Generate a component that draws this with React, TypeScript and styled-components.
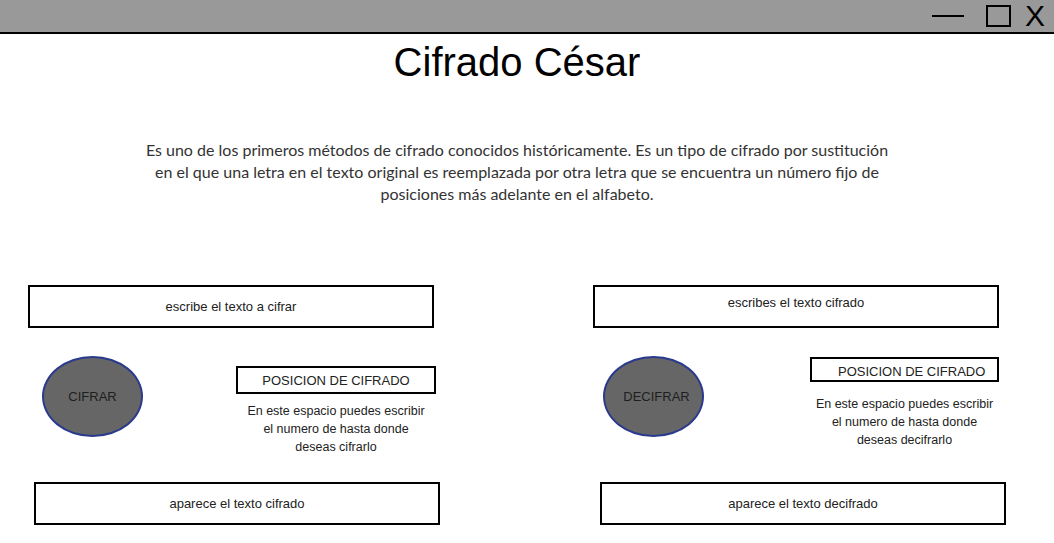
import styled, { createGlobalStyle } from "styled-components";

const GlobalStyle = createGlobalStyle`
  html, body {
    margin: 0;
    padding: 0;
    background: #ffffff;
  }
  body {
    font-family: "Liberation Sans", Arial, sans-serif;
    color: #222;
  }
`;

interface PanelData {
  inputLabel: string;
  inputTop?: boolean;
  action: string;
  actionPad: number;
  ellipseOffset: number;
  posOffset: number;
  posTop: number;
  posWidth: number;
  posPadLeft: number;
  descGap: number;
  description: string[];
  outputLabel: string;
  outputOffset: number;
}

const panels: PanelData[] = [
  {
    inputLabel: "escribe el texto a cifrar",
    action: "CIFRAR",
    actionPad: 0,
    ellipseOffset: 14,
    posOffset: 208,
    posTop: 10,
    posWidth: 200,
    posPadLeft: 0,
    descGap: 8,
    description: [
      "En este espacio puedes escribir",
      "el numero de hasta donde",
      "deseas cifrarlo",
    ],
    outputLabel: "aparece el texto cifrado",
    outputOffset: 6,
  },
  {
    inputLabel: "escribes el texto cifrado",
    inputTop: true,
    action: "DECIFRAR",
    actionPad: 6,
    ellipseOffset: 10,
    posOffset: 217,
    posTop: 1,
    posWidth: 189,
    posPadLeft: 26,
    descGap: 13,
    description: [
      "En este espacio puedes escribir",
      "el numero de hasta donde",
      "deseas decifrarlo",
    ],
    outputLabel: "aparece el texto decifrado",
    outputOffset: 7,
  },
];

const App: React.FC = () => {
  return (
    <>
      <GlobalStyle />
      <TitleBar>
        <Minimize />
        <Maximize />
        <Close>X</Close>
      </TitleBar>
      <Header>
        <Title>Cifrado César</Title>
        <Intro>
          Es uno de los primeros métodos de cifrado conocidos históricamente. Es
          un tipo de cifrado por sustitución en el que una letra en el texto
          original es reemplazada por otra letra que se encuentra un número fijo
          de posiciones más adelante en el alfabeto.
        </Intro>
      </Header>
      <Panels>
        {panels.map((p) => (
          <Panel key={p.action}>
            <TextBox $top={p.inputTop}>{p.inputLabel}</TextBox>
            <MiddleRow>
              <ActionButton $offset={p.ellipseOffset} $pad={p.actionPad}>
                {p.action}
              </ActionButton>
              <PositionGroup $offset={p.posOffset} $top={p.posTop}>
                <PositionBox $width={p.posWidth} $padLeft={p.posPadLeft}>
                  POSICION DE CIFRADO
                </PositionBox>
                <Description $gap={p.descGap}>
                  {p.description.map((line) => (
                    <span key={line}>{line}</span>
                  ))}
                </Description>
              </PositionGroup>
            </MiddleRow>
            <TextBox $offset={p.outputOffset}>{p.outputLabel}</TextBox>
          </Panel>
        ))}
      </Panels>
    </>
  );
};

export default App;

const TitleBar = styled.div`
  height: 32px;
  background: #999999;
  border-bottom: 2px solid #000;
  display: flex;
  justify-content: flex-end;
  align-items: flex-start;
  padding-right: 9px;
`;

const Minimize = styled.div`
  width: 32px;
  height: 2px;
  background: #000;
  margin-top: 15px;
  margin-right: 22px;
`;

const Maximize = styled.div`
  box-sizing: border-box;
  width: 25px;
  height: 22px;
  border: 2px solid #000;
  margin-top: 5px;
  margin-right: 14px;
`;

const Close = styled.span`
  font-family: "Liberation Sans", Arial, sans-serif;
  font-size: 30px;
  line-height: 32px;
  color: #000;
`;

const Header = styled.header`
  width: 1034px;
`;

const Title = styled.h1`
  margin: 5px 0 0;
  text-align: center;
  font-family: "Liberation Sans", Arial, sans-serif;
  font-weight: 400;
  font-size: 40px;
  line-height: 46px;
  color: #000;
`;

const Intro = styled.p`
  width: 754px;
  margin: 54px auto 0;
  text-align: center;
  font-family: Lato, "Open Sans", sans-serif;
  font-size: 16px;
  line-height: 22px;
  color: #333;
`;

const Panels = styled.div`
  display: grid;
  grid-template-columns: 406px 406px;
  column-gap: 159px;
  padding: 0 0 0 28px;
  margin-top: 80px;
`;

const Panel = styled.div`
  display: flex;
  flex-direction: column;
`;

const TextBox = styled.div<{ $top?: boolean; $offset?: number }>`
  box-sizing: border-box;
  width: 406px;
  height: 43px;
  margin-left: ${({ $offset }) => $offset ?? 0}px;
  border: 2px solid #000;
  display: flex;
  justify-content: center;
  align-items: ${({ $top }) => ($top ? "flex-start" : "center")};
  padding-top: ${({ $top }) => ($top ? "8px" : "0")};
  font-size: 13px;
  line-height: 15px;
  color: #222;
`;

const MiddleRow = styled.div`
  position: relative;
  height: 126px;
  margin-top: 28px;
`;

const ActionButton = styled.div<{ $offset: number; $pad: number }>`
  position: absolute;
  left: ${({ $offset }) => $offset}px;
  top: 0;
  box-sizing: border-box;
  width: 101px;
  height: 81px;
  border-radius: 50%;
  background: #666666;
  border: 2px solid #2a3a8c;
  display: flex;
  align-items: center;
  justify-content: center;
  padding-left: ${({ $pad }) => $pad}px;
  font-size: 13px;
  color: #1e1e1e;
`;

const PositionGroup = styled.div<{ $offset: number; $top: number }>`
  position: absolute;
  left: ${({ $offset }) => $offset}px;
  top: ${({ $top }) => $top}px;
  display: flex;
  flex-direction: column;
  align-items: center;
`;

const PositionBox = styled.div<{ $width: number; $padLeft: number }>`
  box-sizing: border-box;
  width: ${({ $width }) => $width}px;
  height: ${({ $padLeft }) => ($padLeft ? 25 : 28)}px;
  border: 2px solid #000;
  display: flex;
  align-items: center;
  justify-content: ${({ $padLeft }) => ($padLeft ? "flex-start" : "center")};
  padding-left: ${({ $padLeft }) => $padLeft}px;
  padding-top: ${({ $padLeft }) => ($padLeft ? 3 : 0)}px;
  white-space: nowrap;
  font-size: 13px;
  color: #222;
`;

const Description = styled.div<{ $gap: number }>`
  margin-top: ${({ $gap }) => $gap}px;
  display: flex;
  flex-direction: column;
  align-items: center;
  font-size: 12.5px;
  line-height: 18px;
  color: #222;
  white-space: nowrap;
`;
